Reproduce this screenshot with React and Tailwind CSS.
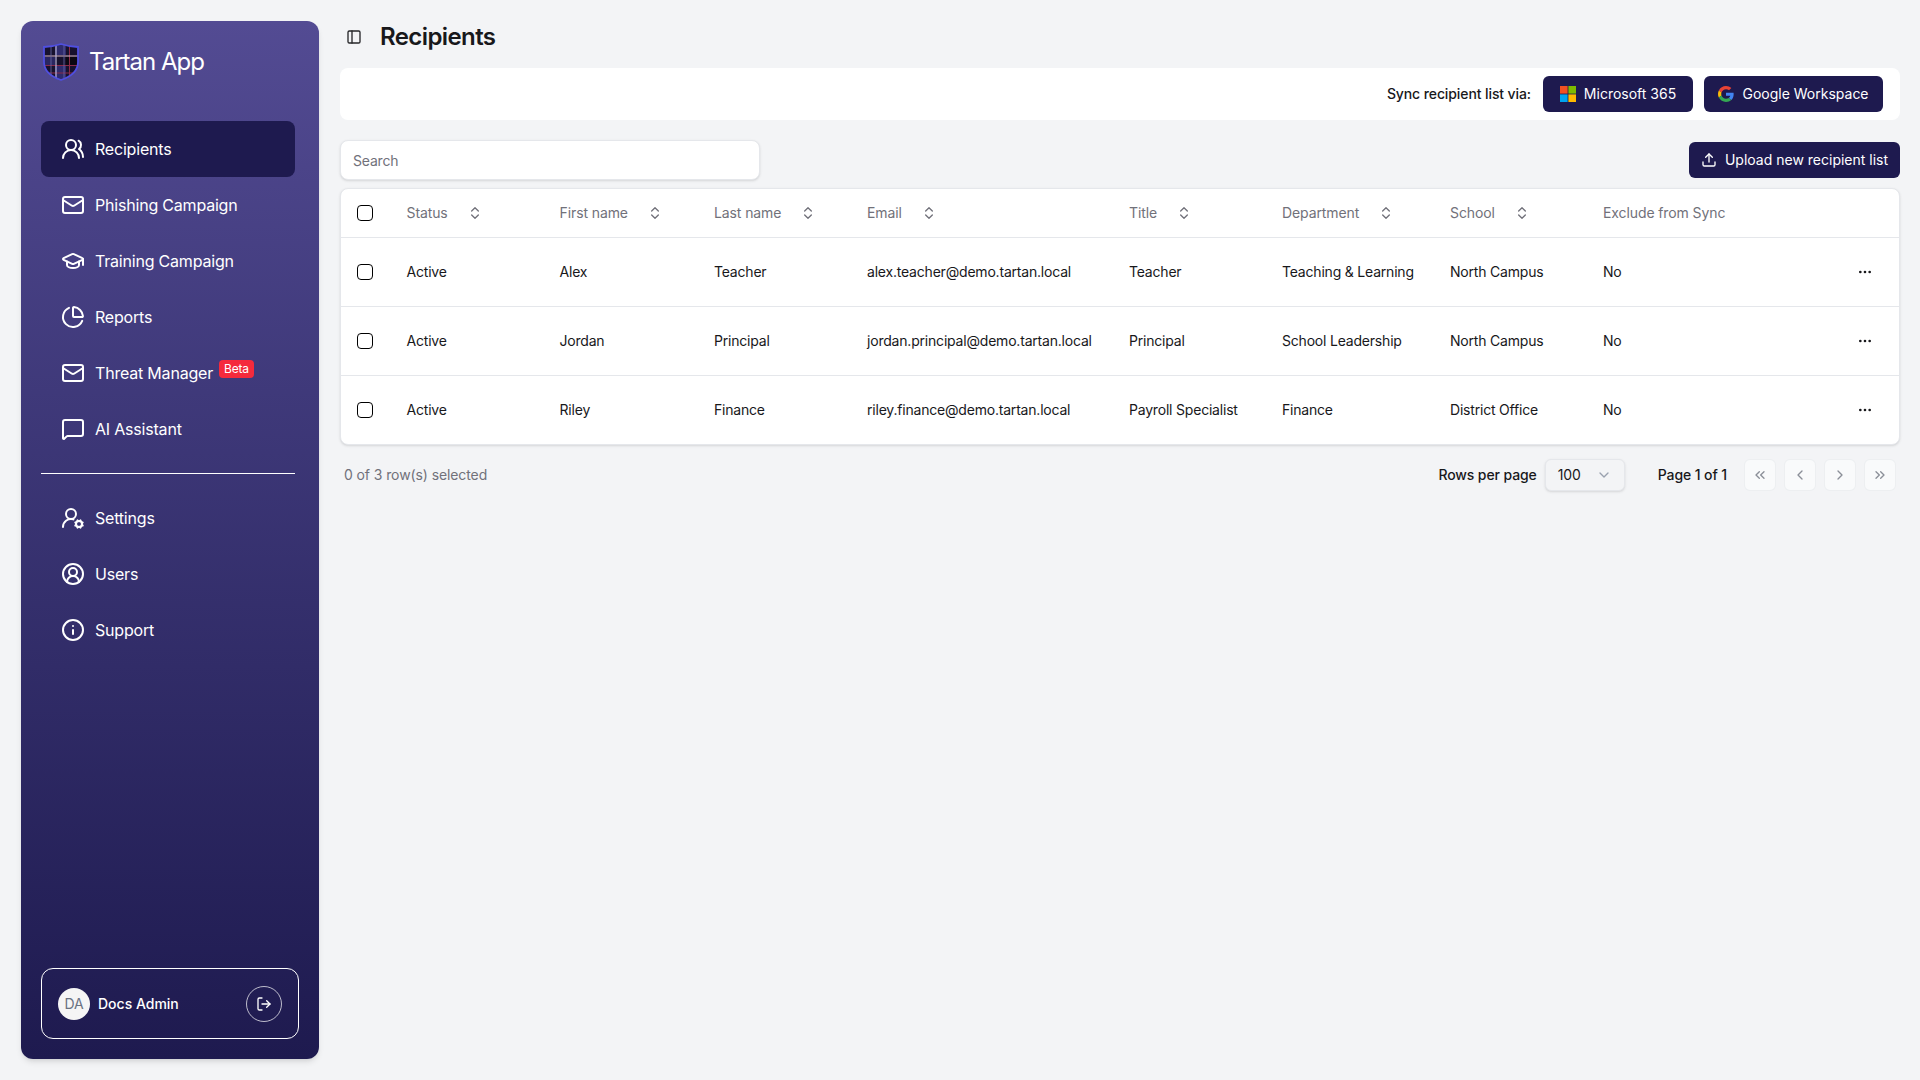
import React from "react";
import {
  UsersRound,
  Mail,
  GraduationCap,
  ChartPie,
  MessageSquare,
  UserRoundCog,
  CircleUserRound,
  Info,
  LogOut,
  PanelLeft,
  ChevronsUpDown,
  Upload,
  Ellipsis,
  ChevronsLeft,
  ChevronLeft,
  ChevronRight,
  ChevronsRight,
  ChevronDown,
} from "lucide-react";

const mainNav = [
  { label: "Recipients", icon: UsersRound, active: true },
  { label: "Phishing Campaign", icon: Mail },
  { label: "Training Campaign", icon: GraduationCap },
  { label: "Reports", icon: ChartPie },
  { label: "Threat Manager", icon: Mail, badge: "Beta" },
  { label: "AI Assistant", icon: MessageSquare },
];

const otherNav = [
  { label: "Settings", icon: UserRoundCog },
  { label: "Users", icon: CircleUserRound },
  { label: "Support", icon: Info },
];

const columns = ["Status", "First name", "Last name", "Email", "Title", "Department", "School"];

const rows = [
  ["Active", "Alex", "Teacher", "alex.teacher@demo.tartan.local", "Teacher", "Teaching & Learning", "North Campus", "No"],
  ["Active", "Jordan", "Principal", "jordan.principal@demo.tartan.local", "Principal", "School Leadership", "North Campus", "No"],
  ["Active", "Riley", "Finance", "riley.finance@demo.tartan.local", "Payroll Specialist", "Finance", "District Office", "No"],
];

function ShieldLogo() {
  return (
    <svg width="36" height="38" viewBox="0 0 36 38" fill="none">
      <defs>
        <clipPath id="shieldClip">
          <path d="M18 1 C24 3 29 4 35 4 V19 C35 28 27 34 18 37 C9 34 1 28 1 19 V4 C7 4 12 3 18 1 Z" />
        </clipPath>
      </defs>
      <g clipPath="url(#shieldClip)">
        <rect width="36" height="38" fill="#17122e" />
        <rect x="12" y="0" width="11" height="12" fill="#2f2c6e" />
        <rect x="0" y="14" width="12" height="9" fill="#2a2660" />
        <rect x="23" y="14" width="13" height="9" fill="#0b0812" />
        <rect x="12" y="23" width="11" height="15" fill="#2f2c6e" />
        <path d="M0 22.5H36M0 30H36M26.5 0V38" stroke="#8a2a4a" strokeWidth="1" />
        <path d="M0 13H36" stroke="#d9b8c4" strokeWidth="1.2" />
        <path d="M13 0V38" stroke="#b9b4d8" strokeWidth="1.2" />
        <path d="M8 0V38M21 0V38" stroke="#6a6aa8" strokeWidth="0.8" />
      </g>
      <path d="M18 1 C24 3 29 4 35 4 V19 C35 28 27 34 18 37 C9 34 1 28 1 19 V4 C7 4 12 3 18 1 Z" stroke="#4f4fe0" strokeWidth="1.8" />
    </svg>
  );
}

function MicrosoftLogo() {
  return (
    <svg width="16" height="16" viewBox="0 0 16 16">
      <rect width="7.6" height="7.6" fill="#f25022" />
      <rect x="8.4" width="7.6" height="7.6" fill="#7fba00" />
      <rect y="8.4" width="7.6" height="7.6" fill="#00a4ef" />
      <rect x="8.4" y="8.4" width="7.6" height="7.6" fill="#ffb900" />
    </svg>
  );
}

function GoogleLogo() {
  return (
    <svg width="16" height="16" viewBox="0 0 48 48">
      <path fill="#EA4335" d="M24 9.5c3.54 0 6.71 1.22 9.21 3.6l6.85-6.85C35.9 2.38 30.47 0 24 0 14.62 0 6.51 5.38 2.56 13.22l7.98 6.19C12.43 13.72 17.74 9.5 24 9.5z" />
      <path fill="#4285F4" d="M46.98 24.55c0-1.57-.15-3.09-.38-4.55H24v9.02h12.94c-.58 2.96-2.26 5.48-4.78 7.18l7.73 6c4.51-4.18 7.09-10.36 7.09-17.65z" />
      <path fill="#FBBC05" d="M10.53 28.59c-.48-1.45-.76-2.99-.76-4.59s.27-3.14.76-4.59l-7.98-6.19C.92 16.46 0 20.12 0 24c0 3.88.92 7.54 2.56 10.78l7.97-6.19z" />
      <path fill="#34A853" d="M24 48c6.48 0 11.93-2.13 15.89-5.81l-7.73-6c-2.15 1.45-4.92 2.3-8.16 2.3-6.26 0-11.57-4.22-13.47-9.91l-7.98 6.19C6.51 42.62 14.62 48 24 48z" />
    </svg>
  );
}

function NavItem({ item }) {
  const Icon = item.icon;
  return (
    <div
      className={
        "flex h-14 items-center gap-[10px] rounded-lg px-5 text-base text-white " +
        (item.active ? "bg-[#1e1a4f]" : "")
      }
    >
      <Icon size={24} strokeWidth={2} />
      <span>{item.label}</span>
      {item.badge && (
        <span className="-ml-1 -translate-y-1 rounded-[4px] bg-[#f52a3c] px-[5px] text-xs leading-[18px] text-white">
          {item.badge}
        </span>
      )}
    </div>
  );
}

function Sidebar() {
  return (
    <div className="flex h-[1038px] w-[298px] shrink-0 flex-col rounded-xl bg-gradient-to-b from-[#534b93] to-[#1e1a4f] pl-5 pr-5 shadow-md">
      <div className="flex h-[82px] items-center gap-[10px] pl-[2px]">
        <ShieldLogo />
        <span className="text-2xl tracking-[-1px] text-white">Tartan App</span>
      </div>
      <div className="mt-[18px] w-[254px]">
        {mainNav.map((item) => (
          <NavItem key={item.label} item={item} />
        ))}
        <div className="mb-4 mt-4 h-px bg-white" />
        {otherNav.map((item) => (
          <NavItem key={item.label} item={item} />
        ))}
      </div>
      <div className="mb-5 mt-auto flex h-[71px] w-[258px] items-center rounded-xl border border-white pl-4 pr-4">
        <div className="flex h-8 w-8 items-center justify-center rounded-full bg-[#f5f5f5] text-sm text-gray-500">DA</div>
        <span className="ml-2 text-sm font-medium tracking-normal text-white">Docs Admin</span>
        <div className="ml-auto flex h-9 w-9 items-center justify-center rounded-full border border-white/70 text-white">
          <LogOut size={16} />
        </div>
      </div>
    </div>
  );
}

function DarkButton({ children, className }) {
  return (
    <button className={"flex h-9 items-center justify-center gap-2 rounded-md bg-[#1e1a4f] text-sm tracking-normal text-white " + className}>
      {children}
    </button>
  );
}

function PageButton({ icon: Icon }) {
  return (
    <button className="flex h-8 w-8 items-center justify-center rounded-md border border-gray-200/60 bg-[#f9fafb] text-[#8b8f98]">
      <Icon size={16} />
    </button>
  );
}

function RecipientsTable() {
  return (
    <div className="mt-2 overflow-hidden rounded-lg border border-gray-200 bg-white shadow-sm">
      <table className="w-full table-fixed text-sm">
        <colgroup>
          <col className="w-[65.5px]" />
          <col className="w-[153px]" />
          <col className="w-[154.5px]" />
          <col className="w-[153px]" />
          <col className="w-[262px]" />
          <col className="w-[153px]" />
          <col className="w-[168px]" />
          <col className="w-[153px]" />
          <col />
          <col className="w-[58px]" />
        </colgroup>
        <thead>
          <tr className="h-[48px] border-b border-gray-200">
            <th className="pl-[16px] text-left">
              <div className="h-4 w-4 rounded-[4px] border border-black" />
            </th>
            {columns.map((col) => (
              <th key={col} className="text-left font-normal tracking-[-0.1px] text-[#71717a]">
                <div className="flex items-center">
                  <span>{col}</span>
                  <ChevronsUpDown size={16} className="ml-[19px]" strokeWidth={2} />
                </div>
              </th>
            ))}
            <th className="text-left font-normal tracking-[-0.1px] text-[#71717a]">Exclude from Sync</th>
            <th />
          </tr>
        </thead>
        <tbody>
          {rows.map((row, i) => (
            <tr key={row[1]} className={"h-[69px] " + (i < rows.length - 1 ? "border-b border-gray-200" : "")}>
              <td className="pl-[16px]">
                <div className="h-4 w-4 rounded-[4px] border border-black" />
              </td>
              {row.map((cell, j) => (
                <td key={j} className="whitespace-nowrap text-[#18181b]">
                  {cell}
                </td>
              ))}
              <td className="pl-4 text-[#18181b]">
                <Ellipsis size={16} />
              </td>
            </tr>
          ))}
        </tbody>
      </table>
    </div>
  );
}

export default function App() {
  return (
    <div className="flex min-h-screen bg-[#f3f4f6] font-['Inter',sans-serif] tracking-[-0.2px]">
      <div className="pl-[21px] pt-[21px]">
        <Sidebar />
      </div>
      <div className="min-w-0 flex-1 pl-[21px] pr-5 pt-[19px]">
        <div className="flex h-9 items-center">
          <PanelLeft size={16} className="ml-[6px] text-[#27272a]" />
          <h1 className="ml-[18px] text-2xl font-semibold tracking-[-0.6px] text-[#18181b]">Recipients</h1>
        </div>
        <div className="mt-[13px] flex h-[52px] items-center justify-end rounded-lg bg-white pr-[17px] text-sm">
          <span className="mr-3 font-medium tracking-[-0.1px] text-[#18181b]">Sync recipient list via:</span>
          <DarkButton className="w-[150px]">
            <MicrosoftLogo />
            Microsoft 365
          </DarkButton>
          <DarkButton className="ml-[11px] w-[179px]">
            <GoogleLogo />
            Google Workspace
          </DarkButton>
        </div>
        <div className="mt-5 flex items-center justify-between">
          <div className="flex h-10 w-[420px] items-center rounded-lg border border-gray-200 bg-white pl-3 pt-[2px] text-sm text-[#71717a] shadow-sm">
            Search
          </div>
          <DarkButton className="w-[211px]">
            <Upload size={16} />
            Upload new recipient list
          </DarkButton>
        </div>
        <RecipientsTable />
        <div className="mt-[14px] flex h-8 items-center pl-1 pr-1 text-sm tracking-[-0.1px]">
          <span className="text-[#71717a]">0 of 3 row(s) selected</span>
          <span className="ml-auto font-medium text-[#18181b]">Rows per page</span>
          <div className="ml-2 flex h-8 w-20 items-center justify-between rounded-md border border-gray-200 bg-[#f3f4f6] pl-3 pr-3 text-[#18181b] shadow-sm">
            100
            <ChevronDown size={16} className="text-gray-400" />
          </div>
          <span className="ml-[33px] mr-[17px] font-medium text-[#18181b]">Page 1 of 1</span>
          <div className="flex gap-2">
            <PageButton icon={ChevronsLeft} />
            <PageButton icon={ChevronLeft} />
            <PageButton icon={ChevronRight} />
            <PageButton icon={ChevronsRight} />
          </div>
        </div>
      </div>
    </div>
  );
}
